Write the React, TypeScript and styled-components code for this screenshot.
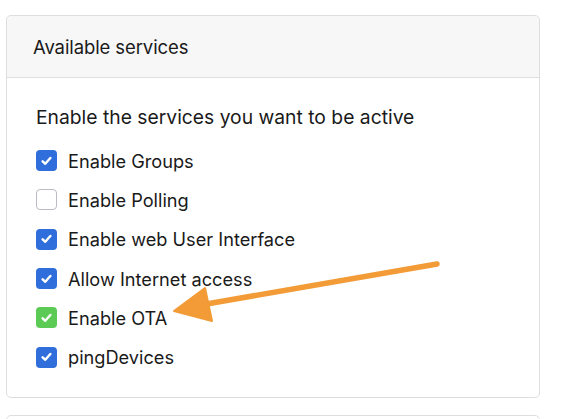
import React from "react";
import styled, { createGlobalStyle } from "styled-components";

const Global = createGlobalStyle`
  html, body { margin: 0; padding: 0; background: #fff; }
  body { font-family: "Inter", "Liberation Sans", sans-serif; color: #1a1a1a; overflow: hidden; }
`;

const Page = styled.div`
  position: relative;
  width: 567px;
  height: 419px;
  overflow: hidden;
  padding: 15px 0 0 6px;
  box-sizing: border-box;
  display: flex;
  flex-direction: column;
  gap: 17px;
`;

const Card = styled.section<{ $stub?: boolean }>`
  width: 534px;
  box-sizing: border-box;
  border: 1px solid #dedede;
  border-radius: 5px;
  background: #fff;
  flex-shrink: 0;
  min-height: ${(p) => (p.$stub ? "40px" : "auto")};
`;

const CardHeader = styled.header`
  height: 62px;
  box-sizing: border-box;
  background: #f7f7f7;
  border-bottom: 1px solid #dedede;
  border-radius: 5px 5px 0 0;
  display: flex;
  align-items: center;
  padding: 0 0 0 26px;
  font-size: 18.5px;
  letter-spacing: -0.1px;
`;

const CardBody = styled.div`
  padding: 27px 0 20px 29px;
  display: flex;
  flex-direction: column;
`;

const Lead = styled.p`
  margin: 0 0 11px;
  font-size: 19.3px;
  line-height: 25px;
`;

const Row = styled.label`
  display: flex;
  align-items: center;
  gap: 11px;
  height: 39.3px;
  font-size: 18.2px;
`;

const Box = styled.span<{ $state: "on" | "off" | "ok" }>`
  width: 21px;
  height: 21px;
  box-sizing: border-box;
  border-radius: 4px;
  display: flex;
  align-items: center;
  justify-content: center;
  background: ${(p) => (p.$state === "on" ? "#2f6edb" : p.$state === "ok" ? "#5ccb55" : "#fff")};
  border: ${(p) => (p.$state === "off" ? "1px solid #b9bcc2" : "none")};
`;

const Arrow = styled.svg`
  position: absolute;
  left: 0;
  top: 0;
  pointer-events: none;
`;

const items: { label: string; state: "on" | "off" | "ok" }[] = [
  { label: "Enable Groups", state: "on" },
  { label: "Enable Polling", state: "off" },
  { label: "Enable web User Interface", state: "on" },
  { label: "Allow Internet access", state: "on" },
  { label: "Enable OTA", state: "ok" },
  { label: "pingDevices", state: "on" },
];

const Check = () => (
  <svg width="11" height="10" viewBox="0 0 10 9">
    <path d="M1.5 4.8 L3.9 7 L8.5 1.8" fill="none" stroke="#fff" strokeWidth="2.2" strokeLinecap="round" strokeLinejoin="round" />
  </svg>
);

export default function App() {
  return (
    <>
      <Global />
      <Page>
        <Card>
          <CardHeader>Available services</CardHeader>
          <CardBody>
            <Lead>Enable the services you want to be active</Lead>
            {items.map((it) => (
              <Row key={it.label}>
                <Box $state={it.state}>{it.state !== "off" && <Check />}</Box>
                {it.label}
              </Row>
            ))}
          </CardBody>
        </Card>
        <Card $stub />
        <Arrow width="567" height="419" viewBox="0 0 567 419">
          <line x1="437" y1="264" x2="195" y2="306" stroke="#f29b37" strokeWidth="5.5" strokeLinecap="round" />
          <polygon points="174,311 205,288 212,321" fill="#f29b37" stroke="#f29b37" strokeWidth="2" strokeLinejoin="round" />
        </Arrow>
      </Page>
    </>
  );
}
